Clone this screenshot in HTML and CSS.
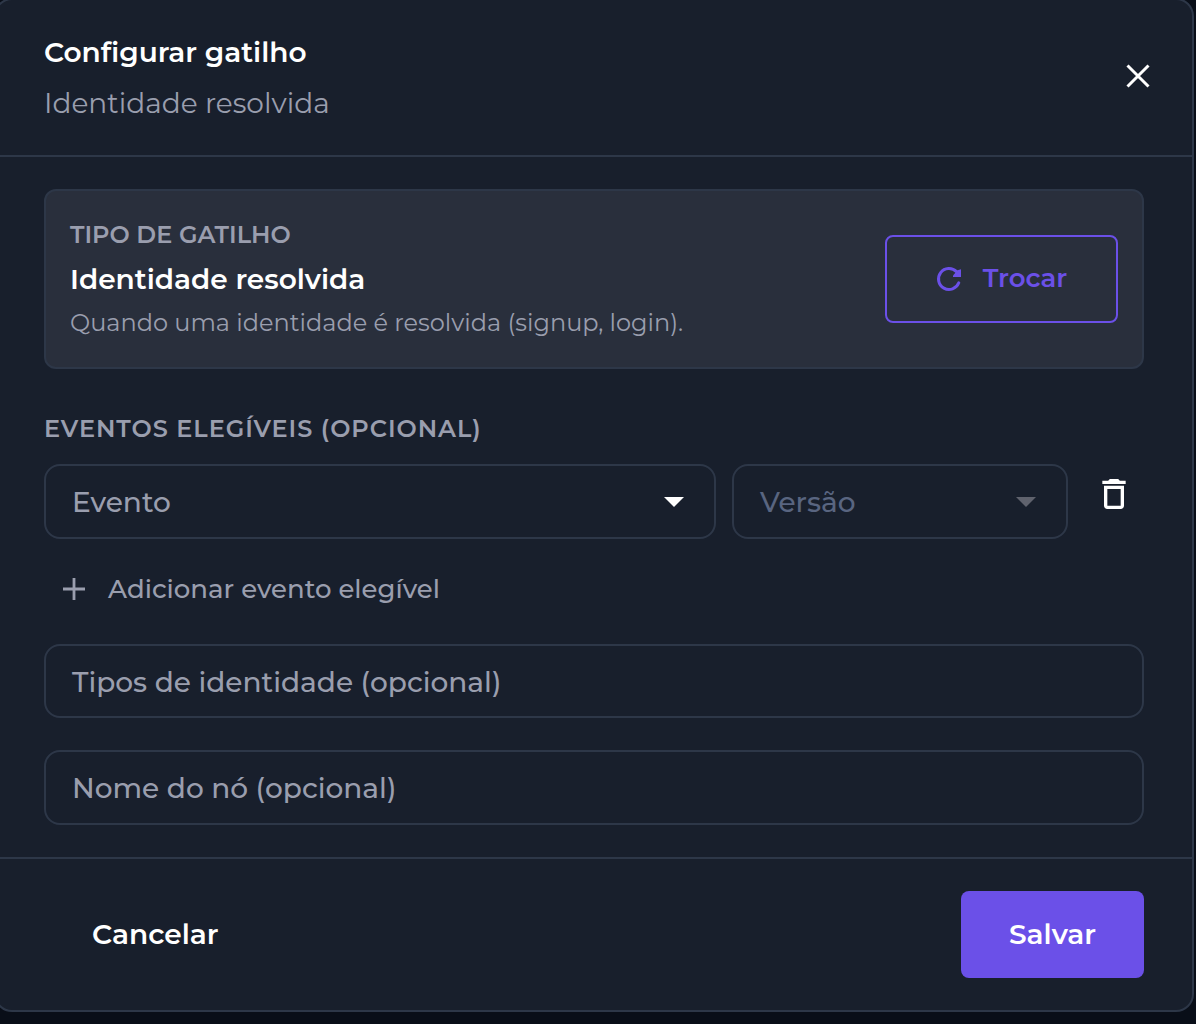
FILE: index.html
```
<!DOCTYPE html>
<html lang="pt-BR">
<head>
<meta charset="utf-8">
<title>Configurar gatilho</title>
<link rel="stylesheet" href="styles.css">
</head>
<body>
<div class="modal">
  <header class="header">
    <div class="heading">
      <h1 class="title">Configurar gatilho</h1>
      <p class="subtitle">Identidade resolvida</p>
    </div>
    <button class="icon-button close" aria-label="Fechar">
      <svg width="24" height="24" viewBox="0 0 24 24"><path d="M1.500 1.500l21 21M22.500 1.500l-21 21" fill="none" stroke="#fff" stroke-width="3"/></svg>
    </button>
  </header>
  <main class="content">
    <section class="card">
      <div class="card-text">
        <p class="card-label">TIPO DE GATILHO</p>
        <p class="card-name">Identidade resolvida</p>
        <p class="card-desc">Quando uma identidade é resolvida (signup, login).</p>
      </div>
      <button class="swap">
        <svg width="28" height="28" viewBox="0 0 28 28"><path d="M21.500 6.600A10.500 10.500 0 1 0 23.800 17.800" fill="none" stroke="currentColor" stroke-width="3" stroke-linecap="round"/><path d="M26 4.200l-3.500 1-4.500 5.300v1.500h8z" fill="currentColor"/></svg>
        <span>Trocar</span>
      </button>
    </section>
    <h2 class="section-label">EVENTOS ELEGÍVEIS (OPCIONAL)</h2>
    <div class="event-row">
      <div class="field event"><span>Evento</span><i class="caret"></i></div>
      <div class="field version"><span>Versão</span><i class="caret"></i></div>
      <button class="icon-button" aria-label="Remover">
        <svg width="40" height="40" viewBox="0 0 24 24"><path fill="#fff" d="M16 9v10H8V9h8m-1.500-6h-5l-1 1H5v2h14V4h-3.500l-1-1zM18 7H6v12c0 1.100.9 2 2 2h8c1.100 0 2-.9 2-2V7z"/></svg>
      </button>
    </div>
    <button class="add">
      <svg width="22" height="22" viewBox="0 0 22 22"><path d="M11 0v22M0 11h22" stroke="currentColor" stroke-width="2.800"/></svg>
      <span>Adicionar evento elegível</span>
    </button>
    <div class="field types">Tipos de identidade (opcional)</div>
    <div class="field name">Nome do nó (opcional)</div>
  </main>
  <footer class="footer">
    <button class="cancel">Cancelar</button>
    <button class="save">Salvar</button>
  </footer>
</div>
</body>
</html>
```
FILE: styles.css
```
* { box-sizing: border-box; }

body {
  margin: 0;
  height: 1024px;
  overflow: hidden;
  background: #090e18;
  color: #fff;
  font-family: Montserrat, Inter, "Open Sans", sans-serif;
}

h1, h2, p { margin: 0; font-weight: 400; }

button {
  margin: 0;
  padding: 0;
  border: 0;
  background: none;
  color: inherit;
  font: inherit;
}

svg { display: block; }

.modal {
  width: 1200px;
  height: 1014px;
  margin: -2px 0 0 -6px;
  border: 2px solid #2d3748;
  border-radius: 18px;
  background: #181f2c;
  display: flex;
  flex-direction: column;
}

.header {
  height: 157px;
  padding: 30px 42px 0 48px;
  border-bottom: 2px solid #2d3748;
  display: flex;
  justify-content: space-between;
}

.title { font-size: 28px; line-height: 44px; font-weight: 600; }
.subtitle { margin-top: 7px; font-size: 28px; line-height: 44px; color: #9a9eae; }
.icon-button { display: flex; align-items: center; justify-content: center; }
.close { width: 24px; height: 24px; margin-top: 34px; }

.content { padding: 32px 48px 0; height: 702px; display: flex; flex-direction: column; }

.card {
  height: 180px;
  padding: 0 24px;
  border: 2px solid #2d3748;
  border-radius: 12px;
  background: #292f3c;
  display: flex;
  align-items: center;
  justify-content: space-between;
}
.card-label { font-size: 24px; line-height: 44px; font-weight: 600; color: #9a9eae; }
.card-name { font-size: 28px; line-height: 44px; font-weight: 600; }
.card-desc { font-size: 24px; line-height: 44px; color: #9a9eae; }

.swap {
  width: 233px;
  height: 88px;
  padding-right: 1px;
  border: 2px solid #6b50e8;
  border-radius: 8px;
  color: #6b50e8;
  display: flex;
  align-items: center;
  justify-content: center;
  gap: 20px;
  font-size: 26px;
  font-weight: 600;
}
.swap span { margin-top: -2px; }

.section-label { margin-top: 44px; font-size: 24px; line-height: 32px; font-weight: 600; color: #9a9eae; letter-spacing: 0.96px; }
.event-row { margin-top: 19px; display: flex; }

.field {
  height: 75px;
  padding: 2px 30px 0 26px;
  border: 2px solid #2d3748;
  border-radius: 16px;
  display: flex;
  align-items: center;
  justify-content: space-between;
  color: #9a9eae;
  font-size: 28px;
  font-weight: 500;
}
.event { width: 672px; margin-right: 16px; }
.version { width: 336px; margin-right: 26px; color: #596580; }
.caret { border: 10px solid transparent; border-top-color: #fff; border-bottom: 0; }
.version .caret { border-top-color: #5f626d; }
.event-row .icon-button { height: 60px; }

.add { height: 40px; margin-top: 30px; padding-left: 19px; display: flex; align-items: center; gap: 23px; color: #9a9eae; font-size: 26px; font-weight: 500; }
.types { height: 74px; margin-top: 35px; }
.name { margin-top: 32px; }

.footer { height: 153px; padding: 32px 48px 0 96px; border-top: 2px solid #2d3748; display: flex; justify-content: space-between; }
.cancel, .save { height: 87px; padding-bottom: 2px; font-size: 28px; font-weight: 600; }
.save { width: 183px; border-radius: 8px; background: #6b50e8; }
```
